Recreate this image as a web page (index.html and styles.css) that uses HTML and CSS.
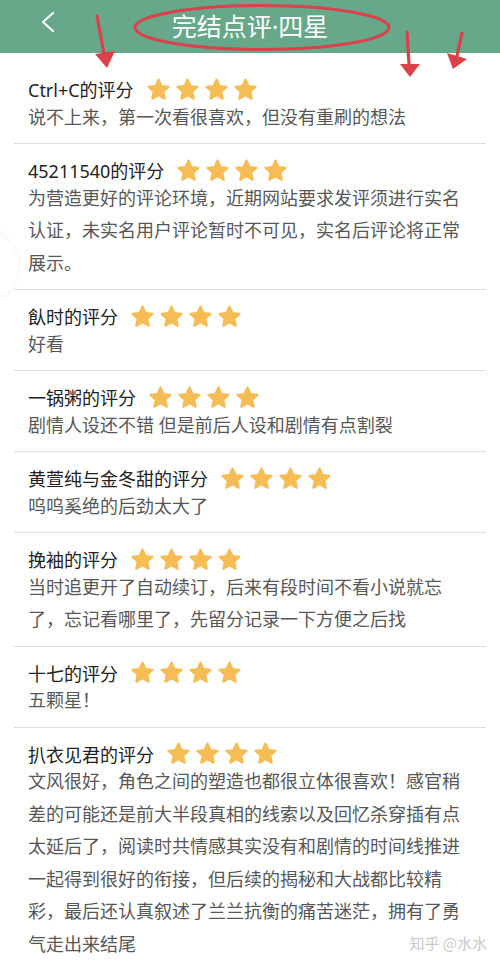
FILE: index.html
```html
<!DOCTYPE html>
<html lang="zh-CN">
<head>
  <meta charset="UTF-8">
  <meta name="viewport" content="width=device-width, initial-scale=1.0">
  <title>完结点评·四星</title>
  <link rel="stylesheet" href="styles.css">
</head>
<body>
  <svg class="defs" width="0" height="0">
    <symbol id="star" viewBox="0 0 24 24">
      <polygon points="12,2.5 14.8,8.7 21.5,9.4 16.5,14 17.9,20.8 12,17.3 6.1,20.8 7.5,14 2.5,9.4 9.2,8.7" fill="#f6bd55" stroke="#f6bd55" stroke-width="2.2" stroke-linejoin="round"/>
    </symbol>
  </svg>

  <header class="topbar">
    <svg class="back" width="16" height="22" viewBox="0 0 16 22">
      <polyline points="13,2 3,11 13,20" fill="none" stroke="#fff" stroke-width="2.2" stroke-linecap="round" stroke-linejoin="round"/>
    </svg>
    <h1 class="title">完结点评·四星</h1>
  </header>

  <ul class="reviews">
    <li class="review">
      <div class="head"><span class="name">Ctrl+C的评分</span><span class="stars"><svg><use href="#star"/></svg><svg><use href="#star"/></svg><svg><use href="#star"/></svg><svg><use href="#star"/></svg></span></div>
      <p class="text">说不上来，第一次看很喜欢，但没有重刷的想法</p>
    </li>
    <li class="review">
      <div class="head"><span class="name">45211540的评分</span><span class="stars"><svg><use href="#star"/></svg><svg><use href="#star"/></svg><svg><use href="#star"/></svg><svg><use href="#star"/></svg></span></div>
      <p class="text">为营造更好的评论环境，近期网站要求发评须进行实名认证，未实名用户评论暂时不可见，实名后评论将正常展示。</p>
    </li>
    <li class="review">
      <div class="head"><span class="name">飤时的评分</span><span class="stars"><svg><use href="#star"/></svg><svg><use href="#star"/></svg><svg><use href="#star"/></svg><svg><use href="#star"/></svg></span></div>
      <p class="text">好看</p>
    </li>
    <li class="review">
      <div class="head"><span class="name">一锅粥的评分</span><span class="stars"><svg><use href="#star"/></svg><svg><use href="#star"/></svg><svg><use href="#star"/></svg><svg><use href="#star"/></svg></span></div>
      <p class="text">剧情人设还不错 但是前后人设和剧情有点割裂</p>
    </li>
    <li class="review">
      <div class="head"><span class="name">黄萱纯与金冬甜的评分</span><span class="stars"><svg><use href="#star"/></svg><svg><use href="#star"/></svg><svg><use href="#star"/></svg><svg><use href="#star"/></svg></span></div>
      <p class="text">呜呜奚绝的后劲太大了</p>
    </li>
    <li class="review">
      <div class="head"><span class="name">挽袖的评分</span><span class="stars"><svg><use href="#star"/></svg><svg><use href="#star"/></svg><svg><use href="#star"/></svg><svg><use href="#star"/></svg></span></div>
      <p class="text">当时追更开了自动续订，后来有段时间不看小说就忘了，忘记看哪里了，先留分记录一下方便之后找</p>
    </li>
    <li class="review">
      <div class="head"><span class="name">十七的评分</span><span class="stars"><svg><use href="#star"/></svg><svg><use href="#star"/></svg><svg><use href="#star"/></svg><svg><use href="#star"/></svg></span></div>
      <p class="text">五颗星！</p>
    </li>
    <li class="review">
      <div class="head"><span class="name">扒衣见君的评分</span><span class="stars"><svg><use href="#star"/></svg><svg><use href="#star"/></svg><svg><use href="#star"/></svg><svg><use href="#star"/></svg></span></div>
      <p class="text">文风很好，角色之间的塑造也都很立体很喜欢！感官稍差的可能还是前大半段真相的线索以及回忆杀穿插有点太延后了，阅读时共情感其实没有和剧情的时间线推进一起得到很好的衔接，但后续的揭秘和大战都比较精彩，最后还认真叙述了兰兰抗衡的痛苦迷茫，拥有了勇气走出来结尾</p>
    </li>
  </ul>

  <!-- floating button peeking in from the left edge -->
  <div class="float-btn"></div>

  <!-- red marks drawn over the screenshot -->
  <svg class="marks" width="500" height="90" viewBox="0 0 500 90">
    <ellipse cx="262" cy="27.5" rx="127" ry="22" fill="none" stroke="#dc4048" stroke-width="3"/>
    <g stroke="#dc4048" stroke-width="3.2" stroke-linecap="round">
      <line x1="97" y1="16" x2="104" y2="54"/>
      <line x1="407" y1="32" x2="409" y2="64"/>
      <line x1="462" y1="33" x2="457" y2="56"/>
    </g>
    <g fill="#dc4048">
      <polygon points="95,54 115,51 107,68"/>
      <polygon points="400,64 420,64 410,77"/>
      <polygon points="447,53 467,59 453,69"/>
    </g>
  </svg>

  <div class="watermark">知乎 @水水</div>
</body>
</html>
```

FILE: styles.css
```css
:root {
  --green: #66a889;
  --ink: #222222;
  --muted: #575757;
  --line: #dedede;
}
* {
  box-sizing: border-box;
  margin: 0;
  padding: 0;
}
html, body {
  overflow: hidden;
}
body {
  position: relative;
  width: 500px;
  height: 969px;
  background: #ffffff;
  font-family: "Noto Sans", "Noto Sans CJK SC", sans-serif;
}
.defs {
  position: absolute;
}
.topbar {
  height: 53px;
  background: var(--green);
  display: flex;
  align-items: center;
  justify-content: center;
  position: relative;
}
.back {
  position: absolute;
  left: 40px;
  top: 11px;
}
.title {
  color: #ffffff;
  font-size: 25px;
  font-weight: 400;
  line-height: 1;
  margin-top: -1px;
}
.reviews {
  list-style: none;
  padding: 10px 14px 0;
}
.review {
  padding: 14px 14px 10px;
  border-bottom: 1px solid var(--line);
}
.review:last-child {
  border-bottom: none;
}
.head {
  display: flex;
  align-items: center;
  height: 26px;
}
.name {
  font-size: 18px;
  color: var(--ink);
  line-height: 26px;
}
.stars {
  display: flex;
  gap: 4px;
  margin-left: 12px;
  margin-top: -2px;
}
.stars svg {
  width: 25px;
  height: 25px;
}
.text {
  margin-top: -2.5px;
  font-size: 18px;
  line-height: 32.5px;
  color: var(--muted);
}
.float-btn {
  position: absolute;
  left: -58px;
  top: 228px;
  width: 76px;
  height: 76px;
  border-radius: 50%;
  background: rgba(255, 255, 255, 0.85);
  box-shadow: 0 0 5px rgba(0, 0, 0, 0.08);
}
.marks {
  position: absolute;
  top: 0;
  left: 0;
  pointer-events: none;
}
.watermark {
  position: absolute;
  right: 13px;
  bottom: 16px;
  font-size: 15px;
  color: #c9c9c9;
  font-family: "Noto Sans CJK SC", sans-serif;
}
```
